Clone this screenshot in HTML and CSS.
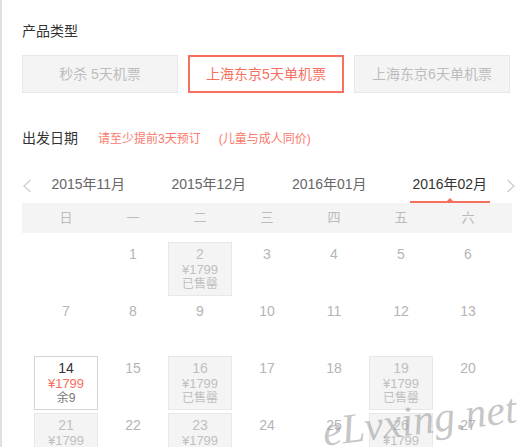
FILE: index.html
```html
<!DOCTYPE html>
<html lang="zh-CN">
<head>
    <meta charset="UTF-8">
    <meta name="viewport" content="width=device-width, initial-scale=1.0">
    <title>选择产品与出发日期</title>
    <link rel="stylesheet" href="styles.css">
</head>
<body>
    <div class="page">
        <section class="product">
            <h3 class="label">产品类型</h3>
            <div class="options">
                <span class="option">秒杀 5天机票</span>
                <span class="option active">上海东京5天单机票</span>
                <span class="option">上海东京6天单机票</span>
            </div>
        </section>

        <section class="date">
            <div class="date-head">
                <h3 class="label">出发日期</h3>
                <span class="note">请至少提前3天预订</span>
                <span class="note note-kids">(儿童与成人同价)</span>
            </div>

            <div class="months">
                <span class="arrow">
                    <svg width="10" height="14" viewBox="0 0 10 14"><polyline points="8.5,1 2,7 8.5,13" fill="none" stroke="#cfcfcf" stroke-width="1.4"/></svg>
                </span>
                <div class="tabs">
                    <span class="tab"><span>2015年11月</span></span>
                    <span class="tab"><span>2015年12月</span></span>
                    <span class="tab"><span>2016年01月</span></span>
                    <span class="tab active"><span>2016年02月</span></span>
                </div>
                <span class="arrow">
                    <svg width="10" height="14" viewBox="0 0 10 14"><polyline points="1.5,1 8,7 1.5,13" fill="none" stroke="#cfcfcf" stroke-width="1.4"/></svg>
                </span>
            </div>

            <div class="week">
                <span>日</span><span>一</span><span>二</span><span>三</span><span>四</span><span>五</span><span>六</span>
            </div>

            <div class="days">
                <div class="day"></div>
                <div class="day"><div class="num">1</div></div>
                <div class="day sold"><div class="num">2</div><div class="price">¥1799</div><div class="stock">已售罄</div></div>
                <div class="day"><div class="num">3</div></div>
                <div class="day"><div class="num">4</div></div>
                <div class="day"><div class="num">5</div></div>
                <div class="day"><div class="num">6</div></div>

                <div class="day"><div class="num">7</div></div>
                <div class="day"><div class="num">8</div></div>
                <div class="day"><div class="num">9</div></div>
                <div class="day"><div class="num">10</div></div>
                <div class="day"><div class="num">11</div></div>
                <div class="day"><div class="num">12</div></div>
                <div class="day"><div class="num">13</div></div>

                <div class="day open"><div class="num">14</div><div class="price">¥1799</div><div class="stock">余9</div></div>
                <div class="day"><div class="num">15</div></div>
                <div class="day sold"><div class="num">16</div><div class="price">¥1799</div><div class="stock">已售罄</div></div>
                <div class="day"><div class="num">17</div></div>
                <div class="day"><div class="num">18</div></div>
                <div class="day sold"><div class="num">19</div><div class="price">¥1799</div><div class="stock">已售罄</div></div>
                <div class="day"><div class="num">20</div></div>

                <div class="day sold"><div class="num">21</div><div class="price">¥1799</div><div class="stock">已售罄</div></div>
                <div class="day"><div class="num">22</div></div>
                <div class="day sold"><div class="num">23</div><div class="price">¥1799</div><div class="stock">已售罄</div></div>
                <div class="day"><div class="num">24</div></div>
                <div class="day"><div class="num">25</div></div>
                <div class="day sold"><div class="num">26</div><div class="price">¥1799</div><div class="stock">已售罄</div></div>
                <div class="day"><div class="num">27</div></div>
            </div>

            <div class="watermark">eLvxing.net</div>
        </section>
    </div>
</body>
</html>
```

FILE: styles.css
```css
html, body { margin: 0; overflow: hidden; }
body { font-family: "Liberation Sans", Arial, "Noto Sans CJK SC", sans-serif; font-size: 14px; color: #333; background: #fff; }
.page { min-height: 100vh; box-sizing: border-box; border-left: 2px solid #e0e0e0; padding: 21px 20px 0; }

.label { margin: 0; font-size: 14px; font-weight: normal; line-height: 20px; color: #333; }

.options { display: flex; gap: 10px; margin-top: 14px; }
.option { width: 156px; height: 38px; box-sizing: border-box; border: 1px solid #e8e8e8; background: #f4f4f4; color: #bdbdbd; text-align: center; line-height: 36px; }
.option.active { border: 2px solid #f7705f; background: #fff; color: #f7705f; line-height: 34px; }

.date { position: relative; margin-top: 35px; }
.date-head { display: flex; align-items: baseline; }
.note { margin-left: 20px; font-size: 12px; color: #f97a6b; }
.note-kids { margin-left: 18px; }

.months { display: flex; align-items: flex-start; margin: 26px -4px 0 0; }
.arrow { width: 10px; flex: none; margin-top: 5px; }
.arrow svg { display: block; }
.tabs { display: flex; flex: 1; margin: 0 -4px; }
.tab { flex: 1; text-align: center; line-height: 20px; color: #666; }
.tab span { display: inline-block; position: relative; width: 80px; padding-bottom: 7px; border-bottom: 2px solid transparent; }
.tab.active { color: #333; }
.tab.active span { border-bottom-color: #f7705f; }
.tab.active span::after { content: ''; position: absolute; left: 50%; bottom: 0; margin-left: -3px; border: 3px solid transparent; border-top: 0; border-bottom-color: #f7705f; }

.week { display: grid; grid-template-columns: repeat(7, 64px); column-gap: 3px; padding: 0 12px; background: #f4f4f4; line-height: 30px; font-size: 13px; color: #bbb; text-align: center; }

.days { display: grid; grid-template-columns: repeat(7, 64px); grid-auto-rows: 54px; gap: 3px; margin-top: 9px; padding: 0 12px; text-align: center; }
.day { box-sizing: border-box; border: 1px solid transparent; padding-top: 2px; color: #b5b5b5; }
.num { font-size: 14px; line-height: 18px; }
.price { font-size: 13px; line-height: 14px; }
.stock { font-size: 12px; line-height: 14px; }
.day.sold { background: #f4f4f4; border-color: #e8e8e8; color: #c0c0c0; }
.day.open { border-color: #d4d4d4; }
.day.open .num { color: #333; }
.day.open .price { color: #fa6e5e; }
.day.open .stock { color: #777; }

.watermark { position: absolute; left: 300px; top: 268px; font-family: "Liberation Serif", serif; font-style: italic; font-size: 42px; color: rgba(160, 160, 160, 0.6); transform: rotate(-7deg); pointer-events: none; }
```
